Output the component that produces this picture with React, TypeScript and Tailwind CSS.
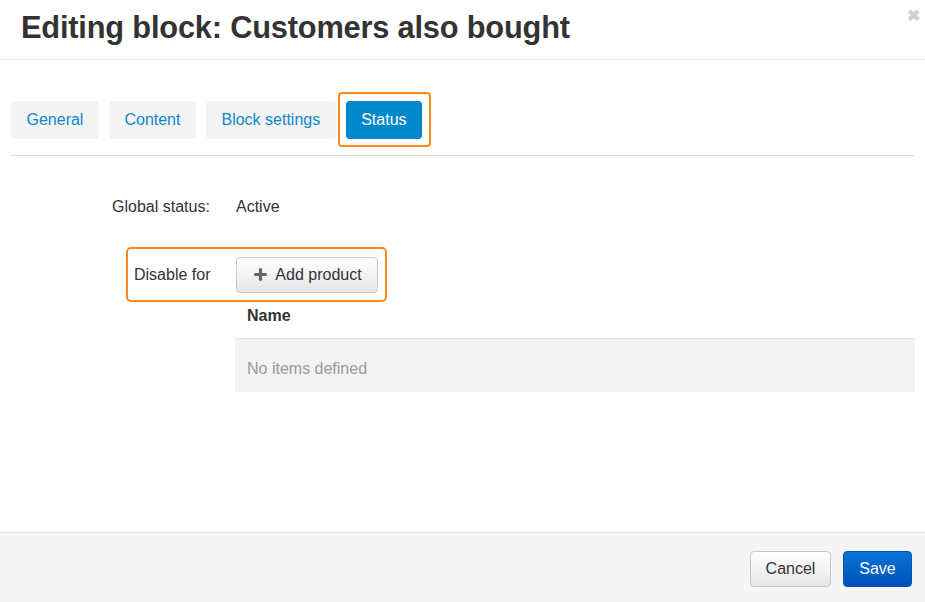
import { Plus } from "lucide-react";

const tabs = ["General", "Content", "Block settings"];

export default function App() {
  return (
    <div
      className="relative flex h-[602px] w-[925px] flex-col bg-white text-[16px] text-[#333]"
      style={{ fontFamily: '"Liberation Sans", Arial, sans-serif' }}
    >
      <div className="flex h-[60px] items-center border-b border-[#e8e8e8] pb-[2px] pl-[21px]">
        <h1 className="text-[30.8px] font-bold tracking-[-0.2px] text-[#333]">Editing block: Customers also bought</h1>
      </div>
      <span className="absolute right-[5px] top-[8px] text-[16px] font-bold leading-none text-[#d0d0d0]">✖</span>

      <div className="mx-[11px] flex items-center gap-[10px] border-b border-[#dcdcdc] pb-[16px] pt-[41px]">
        {tabs.map((t) => (
          <div key={t} className="flex h-[38px] items-center rounded-[4px] bg-[#f4f4f4] px-[15.5px] text-[#0e88cc]">
            {t}
          </div>
        ))}
        <div className="relative flex h-[38px] items-center rounded-[4px] bg-[#0088cc] px-[15.5px] text-white">
          Status
          <span className="absolute -bottom-[8px] -left-[8px] -right-[9px] -top-[9px] rounded-[4px] border-2 border-[#f7891f]" />
        </div>
      </div>

      <div className="flex-1">
        <div className="mt-[39px] flex h-[24px] items-center">
          <div className="w-[236px] pl-[112px]">Global status:</div>
          <div>Active</div>
        </div>

        <div className="ml-[126px] mt-[28px] flex h-[55px] w-[261px] items-center rounded-[5px] border-2 border-[#f7891f] pl-[6px]">
          <div className="w-[102px]">Disable for</div>
          <button className="flex h-[36px] w-[142px] items-center justify-center gap-[6px] rounded-[4px] border border-[#c8c8c8] bg-gradient-to-b from-white to-[#e6e6e6] text-[#333]">
            <Plus size={17} strokeWidth={4.5} className="text-[#666]" />
            Add product
          </button>
        </div>

        <div className="ml-[235px] mr-[10px]">
          <div className="flex h-[36px] items-start pl-[12px] pt-[2px] font-bold leading-[24px]">Name</div>
          <div className="flex h-[54px] items-center border-t border-[#e0e0e0] bg-[#f3f3f3] pl-[12px] pt-[7px] text-[#999]">
            No items defined
          </div>
        </div>
      </div>

      <div className="flex h-[70px] items-center justify-end gap-[12px] border-t border-[#e3e3e3] bg-[#f5f5f5] pr-[13px] pt-[3px]">
        <button className="h-[36px] w-[81px] rounded-[4px] border border-[#c8c8c8] bg-gradient-to-b from-white to-[#e6e6e6] text-[#333]">
          Cancel
        </button>
        <button className="h-[36px] w-[69px] rounded-[4px] border border-[#0055b0] bg-gradient-to-b from-[#0a74d6] to-[#0050b8] text-white">
          Save
        </button>
      </div>
    </div>
  );
}
